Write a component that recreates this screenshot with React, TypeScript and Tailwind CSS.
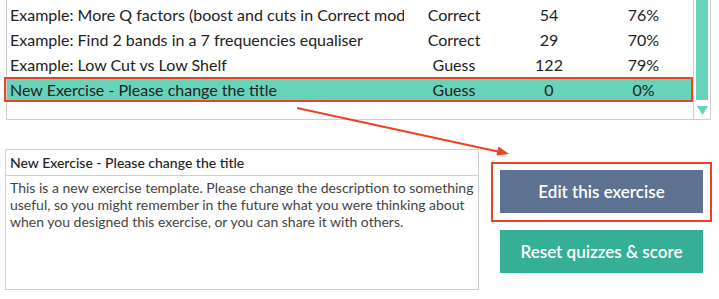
const rows = [
  { title: "Example: More Q factors (boost and cuts in Correct mode)", mode: "Correct", count: "54", score: "76%" },
  { title: "Example: Find 2 bands in a 7 frequencies equaliser", mode: "Correct", count: "29", score: "70%" },
  { title: "Example: Low Cut vs Low Shelf", mode: "Guess", count: "122", score: "79%" },
  { title: "New Exercise - Please change the title", mode: "Guess", count: "0", score: "0%", selected: true },
];

export default function App() {
  return (
    <div className="relative h-[299px] w-[719px] overflow-hidden bg-white font-['Lato','Open_Sans',sans-serif] text-[#222]">
      {/* exercise list (scrolled to the bottom) */}
      <div className="ml-[6px] flex h-[120px] w-[705px] border-x border-b border-[#cfcfcf]">
        <div className="flex-1 pt-[2px]">
          {rows.map((r) => (
            <div
              key={r.title}
              className={`grid h-[25px] grid-cols-[397px_100px_90px_1fr] items-center text-[16px] ${
                r.selected ? "bg-[#66d4bb]" : ""
              }`}
            >
              <div className="overflow-hidden whitespace-nowrap pl-[3px]">{r.title}</div>
              <div className="text-center">{r.mode}</div>
              <div className="text-center">{r.count}</div>
              <div className="text-center">{r.score}</div>
            </div>
          ))}
        </div>
        <div className="flex w-[17px] flex-col items-center border-l border-[#cfcfcf]">
          <div className="h-[100px] w-[12px] bg-[#66d4bb]" />
          <svg width="11" height="9" viewBox="0 0 11 9" className="mt-[6px]">
            <path d="M0 0h11L5.5 9z" fill="#66d4bb" />
          </svg>
        </div>
      </div>

      {/* details + actions */}
      <div className="mt-[29px] flex">
        <div className="ml-[5px] flex h-[141px] w-[474px] flex-col border border-[#cfcfcf]">
          <div className="flex h-[26px] items-center border-b border-[#cfcfcf] px-[4px] text-[14px] font-medium text-[#222]">
            New Exercise - Please change the title
          </div>
          <p className="px-[4px] pt-[3px] text-[14px] leading-[17px] text-[#444]">
            This is a new exercise template. Please change the description to something useful, so you might remember in
            the future what you were thinking about when you designed this exercise, or you can share it with others.
          </p>
        </div>
        <div className="ml-[21px] flex flex-col gap-[17px] pt-[21px]">
          <button className="h-[43px] w-[203px] bg-[#5d7190] text-[17px] font-semibold text-white">
            Edit this exercise
          </button>
          <button className="h-[43px] w-[203px] bg-[#35b097] text-[17px] font-semibold text-white">
            Reset quizzes &amp; score
          </button>
        </div>
      </div>

      {/* annotations */}
      <div className="pointer-events-none absolute left-[4px] top-[77px] h-[25px] w-[689px] border-2 border-[#ee4227]" />
      <div className="pointer-events-none absolute left-[491px] top-[162px] h-[60px] w-[221px] border-2 border-[#ee4227]" />
      <svg className="pointer-events-none absolute left-0 top-0" width="719" height="299">
        <line x1="297" y1="108" x2="500" y2="152" stroke="#ee4227" strokeWidth="2" />
        <path d="M509 154L496.5 155.5L498.5 146.5Z" fill="#ee4227" />
      </svg>
    </div>
  );
}
